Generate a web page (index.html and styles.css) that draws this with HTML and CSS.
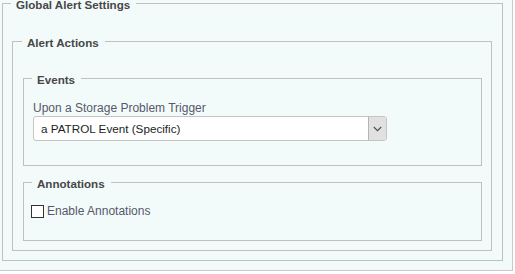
FILE: index.html
```html
<!DOCTYPE html>
<html>
<head>
<meta charset="utf-8">
<link rel="stylesheet" href="styles.css">
</head>
<body>
<div class="panel">
  <fieldset class="fs fs-global">
    <legend>Global Alert Settings</legend>
    <fieldset class="fs fs-actions">
      <legend>Alert Actions</legend>
      <fieldset class="fs fs-events">
        <legend>Events</legend>
        <div class="field-label">Upon a Storage Problem Trigger</div>
        <div class="select">
          <span class="select-text">a PATROL Event (Specific)</span>
          <span class="select-btn">
            <svg width="9" height="6" viewBox="0 0 9 6"><polyline points="0.8,1 4.5,4.6 8.2,1" fill="none" stroke="#505050" stroke-width="1.2"/></svg>
          </span>
        </div>
      </fieldset>
      <fieldset class="fs fs-annotations">
        <legend>Annotations</legend>
        <label class="check-row"><span class="checkbox"></span><span class="check-text">Enable Annotations</span></label>
      </fieldset>
    </fieldset>
  </fieldset>
</div>
</body>
</html>
```
FILE: styles.css
```css
html, body {
  margin: 0;
  padding: 0;
  background: #ffffff;
}
body {
  font-family: "Liberation Sans", Arial, sans-serif;
  font-size: 12px;
  color: #555555;
}
.panel {
  display: flow-root;
  width: 512px;
  box-sizing: content-box;
  padding: 0 0 9px 0;
  background: #f2fbfa;
  border-right: 1px solid #c8c8c8;
  border-bottom: 1px solid #c8c8c8;
}
.fs {
  margin: 0;
  min-width: 0;
  border: 1px solid #c0c0c0;
  box-sizing: border-box;
}
.fs legend {
  font-weight: bold;
  font-size: 11.6px;
  line-height: 14px;
  color: #474747;
  padding: 3px 6px 0 5px;
  margin-left: -1px;
}
.fs-global {
  margin: -5px 9px 0 2px;
  padding: 21px 10px 9px 9px;
}
.fs-actions {
  padding: 20px 9px 9px 10px;
}
.fs-events {
  padding: 14px 9px 24px 9px;
}
.fs-annotations {
  margin-top: 8px;
  padding: 14px 9px 22px 9px;
}
.field-label {
  line-height: 14px;
  height: 14px;
  color: #58586a;
}
.select {
  margin-top: 1px;
  width: 354px;
  height: 25px;
  box-sizing: border-box;
  border: 1px solid #c4c4c4;
  border-radius: 3px;
  background: #ffffff;
  display: flex;
  align-items: stretch;
}
.select-text {
  flex: 1;
  padding-left: 7px;
  font-size: 11.7px;
  line-height: 23px;
  color: #1e1e1e;
}
.select-btn {
  width: 17px;
  background: #e1e1e1;
  border-left: 1px solid #b4b4b4;
  border-radius: 0 2px 2px 0;
  display: flex;
  align-items: center;
  justify-content: center;
}
.select-btn svg {
  display: block;
  margin-top: 1px;
}
.check-row {
  display: flex;
  align-items: center;
  height: 13px;
  margin-left: -2px;
}
.checkbox {
  width: 13px;
  height: 13px;
  box-sizing: border-box;
  border: 1px solid #333333;
  background: #ffffff;
  margin-right: 3px;
}
.check-text {
  line-height: 13px;
  color: #58586a;
}
```
